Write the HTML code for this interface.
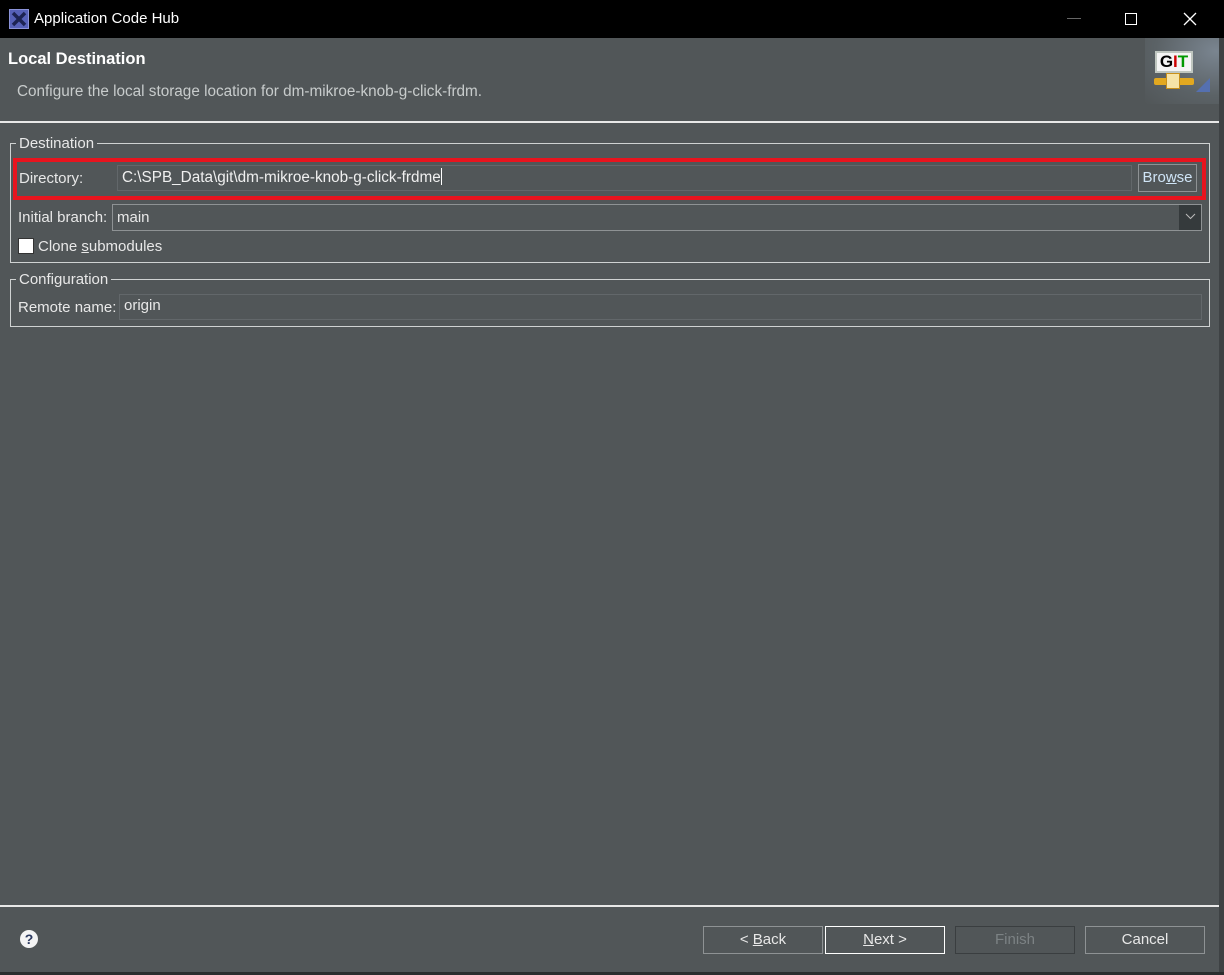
<!DOCTYPE html>
<html><head><meta charset="utf-8"><style>
*{box-sizing:border-box;margin:0;padding:0}
body{width:1224px;height:975px;overflow:hidden;background:#515658;font-family:"Liberation Sans",sans-serif;color:#e8e8e8;position:relative;font-size:15px}
.a{position:absolute}
.title{left:0;top:0;width:1224px;height:38px;background:#000}
.box{border:1px solid #cfd2d2}
.inp{border:1px solid #62676a;background:#515658}
.btn{border:1px solid #8e9294;text-align:center;line-height:26px;font-size:15px;color:#e8e8e8}
u{text-decoration:underline}
</style></head><body>
<div class="a title"></div>
<div class="a" style="left:9px;top:9px;width:20px;height:20px;background:#5661b8;border:1px solid #8a92d8;"><svg width="18" height="18" viewBox="0 0 18 18"><path d="M3 3 L15 15 M15 3 L3 15" stroke="#1c2352" stroke-width="3.5"/></svg></div>
<div class="a" style="left:34px;top:10px;font-size:15px;color:#fff">Application Code Hub</div>
<div class="a" style="left:1067px;top:18px;width:14px;height:1px;background:#666"></div>
<div class="a" style="left:1125px;top:13px;width:12px;height:12px;border:1px solid #fff"></div>
<svg class="a" style="left:1183px;top:12px" width="14" height="14"><path d="M1 1L13 13M13 1L1 13" stroke="#fff" stroke-width="1.3"/></svg>

<div class="a" style="left:1145px;top:38px;width:79px;height:66px;background:radial-gradient(ellipse at 90% 20%,#7a8590 0%,#5b6266 60%,#515658 100%)"></div>
<div class="a" style="left:1155px;top:51px;width:38px;height:22px;background:#f4f4f4;border:2px solid #bfc6c0;font-weight:bold;font-size:17px;line-height:18px;text-align:center"><span style="color:#000">G</span><span style="color:#c00">I</span><span style="color:#090">T</span></div>
<div class="a" style="left:1154px;top:78px;width:40px;height:7px;background:#e2a820;border-radius:2px"></div>
<div class="a" style="left:1166px;top:73px;width:14px;height:16px;background:#f6e4a8;border:1px solid #c8901a"></div>
<div class="a" style="left:1196px;top:78px;width:0;height:0;border-left:14px solid transparent;border-bottom:14px solid #5570b0"></div>

<div class="a" style="left:8px;top:50px;font-size:16.5px;font-weight:bold;color:#fff">Local Destination</div>
<div class="a" style="left:17px;top:83px;font-size:15.3px;color:#c8cccc">Configure the local storage location for dm-mikroe-knob-g-click-frdm.</div>
<div class="a" style="left:0;top:121px;width:1219px;height:2px;background:#e8e8e8"></div>
<div class="a" style="left:1219px;top:38px;width:5px;height:937px;background:#3e4244"></div>

<div class="a box" style="left:10px;top:143px;width:1200px;height:120px"></div>
<div class="a" style="left:16px;top:135px;padding:0 3px;background:#515658">Destination</div>
<div class="a" style="left:13px;top:158px;width:1193px;height:42px;border:4px solid #e8141e"></div>
<div class="a" style="left:19px;top:170px">Directory:</div>
<div class="a inp" style="left:117px;top:165px;width:1015px;height:26px"></div>
<div class="a" style="left:122px;top:168px;color:#f0f0f0;font-size:15.3px">C:\SPB_Data\git\dm-mikroe-knob-g-click-frdme<span style="display:inline-block;width:1px;height:17px;background:#fff;vertical-align:-3px"></span></div>
<div class="a btn" style="left:1138px;top:164px;width:59px;height:28px;color:#cfe4f6">Bro<u>w</u>se</div>
<div class="a" style="left:18px;top:209px">Initial branch:</div>
<div class="a" style="left:112px;top:204px;width:1090px;height:27px;border:1px solid #8e9294;background:#515658"></div>
<div class="a" style="left:1179px;top:205px;width:22px;height:25px;background:#353a3c"></div>
<svg class="a" style="left:1185px;top:213px" width="11" height="7"><path d="M1 1L5.5 5.5L10 1" stroke="#bbb" fill="none"/></svg>
<div class="a" style="left:117px;top:209px">main</div>
<div class="a" style="left:18px;top:238px;width:16px;height:16px;background:#fff;border:1px solid #333"></div>
<div class="a" style="left:38px;top:238px">Clone <u>s</u>ubmodules</div>

<div class="a box" style="left:10px;top:279px;width:1200px;height:48px"></div>
<div class="a" style="left:16px;top:271px;padding:0 3px;background:#515658">Configuration</div>
<div class="a" style="left:18px;top:299px">Remote name:</div>
<div class="a inp" style="left:119px;top:294px;width:1083px;height:26px"></div>
<div class="a" style="left:124px;top:297px">origin</div>

<div class="a" style="left:0;top:905px;width:1219px;height:2px;background:#e8e8e8"></div>
<div class="a" style="left:20px;top:930px;width:18px;height:18px;border-radius:50%;background:#f4f4f4;color:#2c3a60;font-weight:bold;font-size:14px;text-align:center;line-height:18px">?</div>
<div class="a btn" style="left:703px;top:926px;width:120px;height:28px">&lt; <u>B</u>ack</div>
<div class="a btn" style="left:825px;top:926px;width:120px;height:28px;border-color:#fff"><u>N</u>ext &gt;</div>
<div class="a btn" style="left:955px;top:926px;width:120px;height:28px;border-color:#3a3e40;color:#7c8284">Finish</div>
<div class="a btn" style="left:1085px;top:926px;width:120px;height:28px">Cancel</div>
<div class="a" style="left:0;top:972px;width:1224px;height:3px;background:#2a2d2e"></div>
</body></html>
